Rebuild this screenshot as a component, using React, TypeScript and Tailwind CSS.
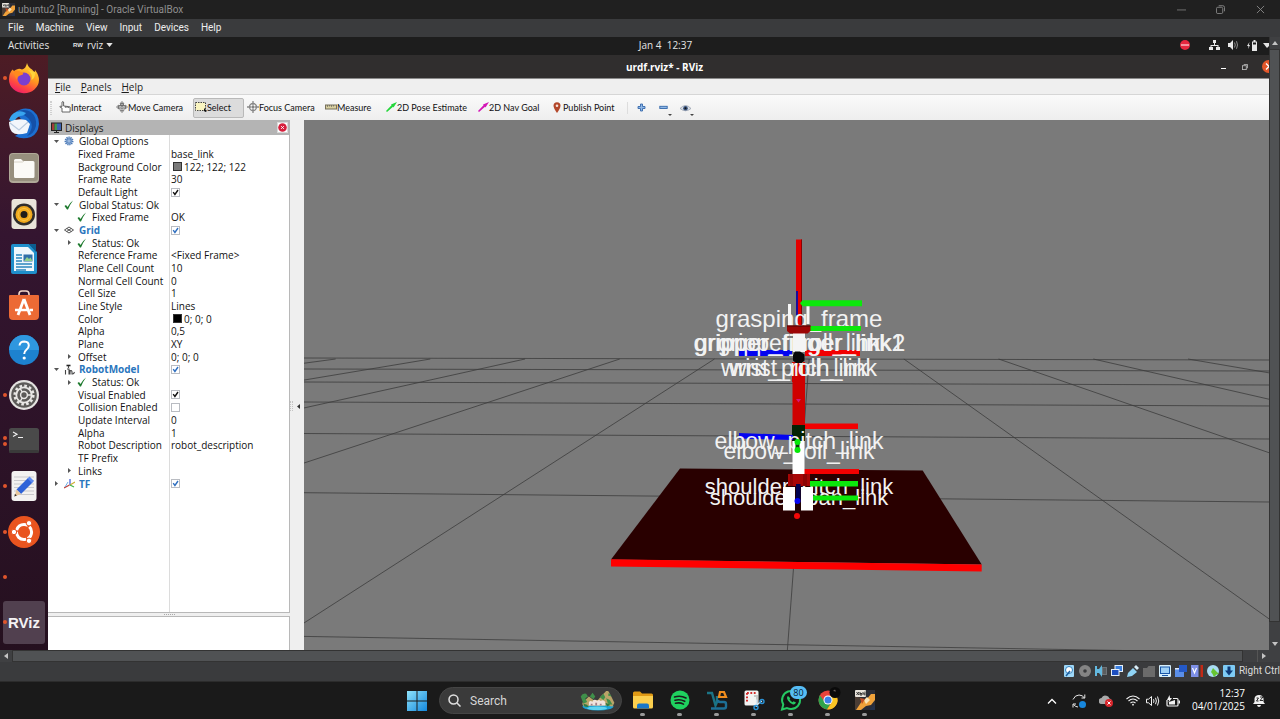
import type { ReactNode } from "react";

/* ---------- Host window (VirtualBox) ---------- */

function VBoxIcon({ className }: { className: string }) {
  return (
    <svg viewBox="0 0 20 20" className={className} aria-hidden="true">
      <rect width="20" height="20" fill="#2b2d36" />
      <path d="M0 6l6 2 3 5-5 7H0z" fill="#4a3d35" />
      <path d="M1 20l6-9 4-1 5-6h4v6l-4 5-5 1-5 4z" fill="#f0a23a" />
      <path d="M9 10l3-3 3 3-4 4z" fill="#fbe6b8" />
      <path d="M5 8l5 1-3 5z" fill="#c24f22" />
      <path d="M14 20l6-6v6z" fill="#23314a" />
      <rect width="11" height="7" rx="1" fill="#e8e4dc" />
      <path d="M1.500 2l2.500 3M4 2L1.500 5M5 3.500h2M5 2v3h2V3.800M8 2v2h2M10 1.500V5.500" stroke="#222" strokeWidth="0.900" fill="none" />
    </svg>
  );
}

function HostTitleBar() {
  return (
    <header className="flex h-[19px] shrink-0 items-center bg-[#202020] pl-[2px] text-[#8f8f8f]">
      <VBoxIcon className="size-[13px]" />
      <h1 className="ml-[3px] flex-1 font-['Roboto'] text-[10px] leading-none">ubuntu2 [Running] - Oracle VirtualBox</h1>
      <div className="flex">
        <button aria-label="Minimize" className="flex h-[19px] w-[39px] items-center justify-center">
          <svg viewBox="0 0 10 10" className="size-[9px]"><path d="M0 5.500h10" stroke="#777" /></svg>
        </button>
        <button aria-label="Restore" className="flex h-[19px] w-[39px] items-center justify-center">
          <svg viewBox="0 0 10 10" className="size-[9px]" fill="none" stroke="#8a8a8a">
            <rect x="0.500" y="2.500" width="7" height="7" rx="1.500" />
            <path d="M3 .8h4.500a2 2 0 012 2V7" />
          </svg>
        </button>
        <button aria-label="Close" className="flex h-[19px] w-[40px] items-center justify-center">
          <svg viewBox="0 0 10 10" className="size-[9px]"><path d="M1 1l8 8M9 1l-8 8" stroke="#8a8a8a" /></svg>
        </button>
      </div>
    </header>
  );
}

function HostMenu() {
  return (
    <nav className="flex h-[18px] shrink-0 items-center gap-[12px] bg-[#3a3b3d] pl-[8px] font-['Roboto'] text-[10px] leading-none text-[#eeeeee]">
      {["File", "Machine", "View", "Input", "Devices", "Help"].map((m) => (
        <button key={m}>{m}</button>
      ))}
    </nav>
  );
}

/* ---------- Guest desktop ---------- */

function GnomeBar() {
  return (
    <div className="grid h-[18px] shrink-0 grid-cols-[1fr_auto_1fr] items-center overflow-hidden bg-[#1d1d1d] pb-[2px] text-[10px] leading-none text-[#e4e4e4]">
      <div className="flex items-center">
        <button className="ml-[8px] w-[65px] text-left">Activities</button>
        <button className="flex items-center">
          <span className="font-['Liberation_Sans'] text-[6px] font-bold">RW</span>
          <span className="ml-[4px]">rviz</span>
          <svg viewBox="0 0 8 5" className="ml-[3px] h-[4px] w-[7px]"><path d="M0 0h8L4 5z" fill="#e4e4e4" /></svg>
        </button>
      </div>
      <time className="pl-[62px]">Jan 4&nbsp; 12:37</time>
      <div className="flex items-center justify-end">
        <svg viewBox="0 0 10 10" className="size-[10px]">
          <circle cx="5" cy="5" r="5" fill="#e5273f" />
          <path d="M1 5h8" stroke="#fff" strokeWidth="1" />
        </svg>
        <svg viewBox="0 0 11 10" className="ml-[19px] h-[10px] w-[11px]" fill="#e8e8e8">
          <path d="M4 0h3v3H4zM0 7h4v3H0zM7 7h4v3H7zM5 3h1v2h3.500v2h-1V6h-6v1h-1V5H5z" />
        </svg>
        <svg viewBox="0 0 11 10" className="ml-[8px] h-[10px] w-[11px]" fill="#e8e8e8">
          <path d="M0 3h2l3-3v10L2 7H0z" />
          <path d="M6.500 2.500q1.500 2.500 0 5M8.500 1.200q2 3.800 0 7.600" stroke="#8d8d8d" fill="none" />
        </svg>
        <svg viewBox="0 0 11 11" className="ml-[8px] h-[11px] w-[11px]" fill="#e8e8e8">
          <path d="M2.500 2L0 6h1.500L1 9l2-4H1.800z" />
          <path d="M5 1.500h1.500V0h2v1.500H10V11H5z" />
          <path d="M6 2.500h3v2H6z" fill="#1d1d1d" />
        </svg>
        <svg viewBox="0 0 6 5" className="ml-[5px] h-[5px] w-[6px]"><path d="M0 0h6v3L4 5z" fill="#e4e4e4" /></svg>
      </div>
    </div>
  );
}

const dockIcons: { name: string; dots: number; art: ReactNode; active?: boolean }[] = [
  {
    name: "Firefox",
    dots: 1,
    art: (
      <svg viewBox="0 0 32 32" className="size-[32px]">
        <defs>
          <linearGradient id="ff" x1="0.800" y1="0" x2="0.300" y2="1">
            <stop offset="0" stopColor="#ffe23c" />
            <stop offset="0.450" stopColor="#ff9a1f" />
            <stop offset="0.750" stopColor="#ff4a3f" />
            <stop offset="1" stopColor="#ee1c6b" />
          </linearGradient>
        </defs>
        <path d="M19 1q1 4 5 6.500 2 1.500 2.500 4L27 8q4 5 4 10A15 13.500 0 011 17.500Q1 11 4.500 7.500L6 9q2-1.500 4-2 2-.5 4 .5 4-1 5-6.500z" fill="url(#ff)" />
        <circle cx="16" cy="17" r="6.500" fill="#7a3fd0" />
        <path d="M6 9q4-1 9 2 1 1.500-3 2.500-3 1-3 4Q6 14 6 9z" fill="#ff8a1c" />
        <path d="M20 8q5 4 3.500 10 4-2 3.500-8z" fill="#ffd43a" />
      </svg>
    ),
  },
  {
    name: "Thunderbird",
    dots: 0,
    art: (
      <svg viewBox="0 0 32 32" className="size-[32px]">
        <path d="M8 5Q14 0 22 2q9 4 9 15-1 10-8 13-9 3-16-1l12-8z" fill="#1c6fd1" />
        <path d="M8 5q8-4 15 0 6 5 5 14-2 8-9 10 9-10 1-18Q14 6 8 5z" fill="#1450a8" />
        <path d="M8 5q5-2 10 1-2 3-6 3-5 2-6 7L1 13q2-6 7-8z" fill="#38a4ee" />
        <path d="M1 15q8-4 17-2l4 4-3 9Q8 29 4 25q-3-4-3-10z" fill="#f2f6fb" />
        <path d="M2 16l9 7 9-8" stroke="#b9cbe0" fill="none" strokeWidth="1.200" />
      </svg>
    ),
  },
  {
    name: "Files",
    dots: 0,
    art: (
      <svg viewBox="0 0 30 30" className="size-[30px]">
        <rect width="30" height="30" rx="4" fill="#b0a998" />
        <rect x="1" y="1" width="28" height="27" rx="3" fill="#978f7e" />
        <path d="M5 7.500Q5 6 6.500 6H12l2 2h10q1.500 0 1.500 1.500v14q0 1.500-1.500 1.500H6.500Q5 25 5 23.500z" fill="#fbfaf7" />
        <path d="M5 9h8.500L15 8" stroke="#d8d3c8" fill="none" />
      </svg>
    ),
  },
  {
    name: "Rhythmbox",
    dots: 0,
    art: (
      <svg viewBox="0 0 26 30" className="h-[30px] w-[26px]">
        <rect x="0.500" width="25" height="30" rx="3" fill="#e9e4da" />
        <circle cx="13" cy="15.500" r="11" fill="#2f2d2b" />
        <circle cx="13" cy="15.500" r="8.500" fill="#f0a81c" />
        <circle cx="13" cy="15.500" r="6" fill="none" stroke="#f7c548" />
        <circle cx="13" cy="15.500" r="3.500" fill="#1e1c1a" />
      </svg>
    ),
  },
  {
    name: "LibreOffice Writer",
    dots: 0,
    art: (
      <svg viewBox="0 0 26 30" className="h-[30px] w-[26px]">
        <path d="M2 0h16l8 8v20q0 2-2 2H2q-2 0-2-2V2q0-2 2-2z" fill="#1f8fcb" />
        <path d="M18 0h7v8z" fill="#0b5d8f" />
        <path d="M3 3h14l6 6v18H3z" fill="#eef7fc" />
        <path d="M5 11h6M5 14h6M5 17h6M5 20h16M5 23h16M5 26h10" stroke="#2a86bd" strokeWidth="1.300" />
        <rect x="12.500" y="10.500" width="9" height="7" fill="#2f6fa8" />
        <path d="M13 17l3-4 2 2 1.500-1.500 2 3.500z" fill="#8fd08a" />
      </svg>
    ),
  },
  {
    name: "Ubuntu Software",
    dots: 0,
    art: (
      <svg viewBox="0 0 30 30" className="size-[30px]">
        <path d="M10 7V4q0-3 3-3h4q3 0 3 3v3" fill="none" stroke="#f3d5c6" strokeWidth="1.600" />
        <path d="M0 6q0-1 1-1h28q1 0 1 1v20q0 4-4 4H4q-4 0-4-4z" fill="#ec6a35" />
        <path d="M15 9L9 25M15 9l6 16" stroke="#fff" strokeWidth="2.800" />
        <path d="M6 20h12M20.500 20H24" stroke="#fff" strokeWidth="2.500" />
      </svg>
    ),
  },
  {
    name: "Help",
    dots: 0,
    art: (
      <svg viewBox="0 0 30 30" className="size-[30px]">
        <circle cx="15" cy="15" r="15" fill="#1d82cf" />
        <path d="M0 15a15 15 0 0130 0z" fill="#2f97df" />
        <path d="M10.500 10.500q.5-4 4.800-4 4.500.2 4.500 4 0 2.500-2.600 4.500-2 1.500-2 4" fill="none" stroke="#fff" strokeWidth="2" />
        <circle cx="15.200" cy="23" r="1.600" fill="#fff" />
      </svg>
    ),
  },
  {
    name: "Settings",
    dots: 1,
    art: (
      <svg viewBox="0 0 30 30" className="size-[30px]">
        <circle cx="15" cy="15" r="15" fill="#e4e2e0" />
        <circle cx="15" cy="15" r="12.800" fill="#5c5a58" />
        <circle cx="15" cy="15" r="9.300" fill="none" stroke="#e9e7e5" strokeWidth="2.600" strokeDasharray="2.600 2.270" />
        <circle cx="15" cy="15" r="7.700" fill="none" stroke="#e9e7e5" strokeWidth="1.800" />
        <circle cx="15" cy="15" r="3.400" fill="none" stroke="#e9e7e5" strokeWidth="1.500" />
        <path d="M18.500 15h4M13.200 12l-2-3.500M13.200 18l-2 3.500" stroke="#e9e7e5" strokeWidth="1.500" />
      </svg>
    ),
  },
  {
    name: "Terminal",
    dots: 2,
    art: (
      <svg viewBox="0 0 30 25" className="h-[25px] w-[30px]">
        <rect width="30" height="25" rx="2.500" fill="#4a4a4a" />
        <rect y="22" width="30" height="3" rx="1.500" fill="#3a3a3a" />
        <path d="M4 4l4 2.200L4 8.400M9 9.500h5" stroke="#f1f1f1" fill="none" strokeWidth="1.100" />
      </svg>
    ),
  },
  {
    name: "Text Editor",
    dots: 1,
    art: (
      <svg viewBox="0 0 26 30" className="h-[30px] w-[26px]">
        <rect x="0.500" width="25" height="30" rx="3" fill="#f3f2f1" />
        <path d="M3 6h20M3 9.500h20M3 13h20M3 16.500h20M3 20h20M3 23.500h20" stroke="#c9c9cc" />
        <path d="M17 7l4.500 4.500L10 23l-4.500-4.500z" fill="#2f63d8" />
        <path d="M18.500 5.500l4.500 4.500-2 2-4.500-4.500z" fill="#5d8af0" />
        <path d="M5.500 18.500L10 23l-6.500 2.500z" fill="#e8c79d" />
        <path d="M4.200 23l1.600 1.600-2.600 1z" fill="#2a2a2a" />
      </svg>
    ),
  },
  {
    name: "Ubuntu",
    dots: 1,
    art: (
      <svg viewBox="0 0 32 32" className="size-[32px]">
        <circle cx="16" cy="16" r="16" fill="#e9541f" />
        <circle cx="16" cy="16" r="7.600" fill="none" stroke="#fff" strokeWidth="3" strokeDasharray="14.300 1.620" strokeDashoffset="6.300" />
        <g fill="#fff" stroke="#e9541f">
          <circle cx="6" cy="16" r="2.700" />
          <circle cx="21" cy="7.200" r="2.700" />
          <circle cx="21" cy="24.800" r="2.700" />
        </g>
      </svg>
    ),
  },
  { name: "Background application", dots: 1, art: null },
  {
    name: "RViz",
    dots: 1,
    active: true,
    art: <span className="font-['Liberation_Sans_Narrow','Liberation_Sans'] text-[15px] font-bold leading-none text-[#f4f2f4]">RViz</span>,
  },
];

function Dock() {
  return (
    <aside className="flex w-[48px] shrink-0 flex-col bg-linear-to-b from-[#4d1c24] via-[#341530] via-30% to-[#25101f] pb-[5px]">
      {dockIcons.map((d) => (
        <button key={d.name} aria-label={d.name} className="relative flex flex-1 items-center justify-center">
          {d.active && <span className="absolute inset-x-[3px] inset-y-[1px] rounded-[3px] bg-[#51404f]" />}
          <span className="absolute left-[3px] flex flex-col gap-[2px]">
            {Array.from({ length: d.dots }, (_, i) => (
              <i key={i} className="size-[4px] rounded-full bg-[#e0552c]" />
            ))}
          </span>
          <span className="relative">{d.art}</span>
        </button>
      ))}
    </aside>
  );
}

/* ---------- RViz window ---------- */

function RvizTitleBar() {
  return (
    <div className="grid h-[24px] shrink-0 grid-cols-[1fr_auto_1fr] items-center overflow-hidden border-b border-[#8a8a8a] bg-[#302e2e] text-white">
      <span />
      <h2 className="pl-[12px] text-[10px] font-bold leading-none">urdf.rviz* - RViz</h2>
      <div className="flex items-center justify-end">
        <button aria-label="Minimize" className="flex size-[22px] items-end justify-center pb-[9px]">
          <i className="h-px w-[5px] bg-white" />
        </button>
        <button aria-label="Restore" className="flex size-[22px] items-center justify-center">
          <svg viewBox="0 0 7 7" className="size-[6px]" fill="none" stroke="#bbb">
            <rect x="0.500" y="2" width="4.500" height="4.500" />
            <path d="M2 .5h4.500V5" />
          </svg>
        </button>
        <button aria-label="Close" className="ml-[6px] flex">
          <svg viewBox="0 0 7 13" className="h-[13px] w-[7px]">
            <circle cx="6.500" cy="6.500" r="6.500" fill="#e2572b" />
            <path d="M4 3.500l3 3-3 3" stroke="#fff" fill="none" strokeWidth="1.300" />
          </svg>
        </button>
      </div>
    </div>
  );
}

function RvizMenu() {
  return (
    <nav className="flex h-[16px] shrink-0 items-center gap-[10px] border-b border-[#d6d6d6] bg-[#efefef] pl-[7px] text-[10px] leading-none text-[#1c1c1c]">
      {["File", "Panels", "Help"].map((m) => (
        <button key={m}>
          <u>{m[0]}</u>
          {m.slice(1)}
        </button>
      ))}
    </nav>
  );
}

function Arrow({ color }: { color: string }) {
  return (
    <svg viewBox="0 0 11 10" className="h-[10px] w-[11px]">
      <path d="M0 9L5.500 3.200 5 2.500 11 0 7.500 5.500 7 4.700 1 10z" fill={color} />
    </svg>
  );
}

const tools: { label: string; icon: ReactNode; width: string; active?: boolean }[] = [
  {
    label: "Interact",
    width: "w-[57px]",
    icon: (
      <svg viewBox="0 0 12 12" className="size-[12px]" fill="#fff" stroke="#555" strokeWidth="0.900">
        <path d="M3 11V7L.8 6 1.500 5 3 5.500V1q1-1 1.600 0v4l1.800.2L8 5.400l1.600.2 1.500.4V11z" />
        <path d="M6.400 5.200v1.600M8 5.400V7M9.600 5.600V7" />
      </svg>
    ),
  },
  {
    label: "Move Camera",
    width: "w-[79px]",
    icon: (
      <svg viewBox="0 0 12 12" className="size-[12px]" fill="#ddd" stroke="#666" strokeWidth="0.800">
        <path d="M6 .5l1.800 2H4.200zM6 11.500l1.800-2H4.200zM.5 6l2-1.800v3.600zM11.500 6l-2-1.800v3.600z" />
        <path d="M3 4.500h6v3.500H3zM4.500 3h3v1.500h-3z" />
        <circle cx="6" cy="6.200" r="1.200" />
      </svg>
    ),
  },
  {
    label: "Select",
    width: "w-[51px]",
    active: true,
    icon: (
      <svg viewBox="0 0 12 10" className="h-[10px] w-[12px]">
        <rect x="0.500" y="0.500" width="10" height="8" fill="#faf5c0" stroke="#444" strokeDasharray="1.500 1" />
        <path d="M9 6l3 3-1.500 1L9 9z" fill="#111" />
      </svg>
    ),
  },
  {
    label: "Focus Camera",
    width: "w-[78px]",
    icon: (
      <svg viewBox="0 0 12 12" className="size-[12px]" fill="none" stroke="#888">
        <circle cx="6" cy="6" r="3.500" strokeWidth="1.300" />
        <path d="M6 0v4M6 8v4M0 6h4M8 6h4" strokeWidth="1.300" />
        <circle cx="6" cy="6" r="1.200" fill="#777" />
      </svg>
    ),
  },
  {
    label: "Measure",
    width: "w-[61px]",
    icon: (
      <svg viewBox="0 0 12 12" className="size-[12px]">
        <rect x="0.500" y="4" width="11" height="4" fill="#d8cfa0" stroke="#77705a" />
        <path d="M2.500 4v2M4.500 4v1.500M6.500 4v2M8.500 4v1.500" stroke="#555" strokeWidth="0.600" />
      </svg>
    ),
  },
  { label: "2D Pose Estimate", width: "w-[92px]", icon: <Arrow color="#24d63a" /> },
  { label: "2D Nav Goal", width: "w-[74px]", icon: <Arrow color="#d316b6" /> },
  {
    label: "Publish Point",
    width: "w-[77px]",
    icon: (
      <svg viewBox="0 0 11 11" className="size-[11px]">
        <path d="M5 11Q1.500 6 1.500 3.800 1.500.2 5 .2t3.500 3.600Q8.500 6 5 11z" fill="#b3472a" />
        <circle cx="5" cy="3.800" r="1.300" fill="#f6e3da" />
      </svg>
    ),
  },
];

function Caret() {
  return (
    <svg viewBox="0 0 4 2" className="absolute right-[2px] bottom-[3px] h-[2px] w-[4px]">
      <path d="M0 0h4L2 2z" fill="#444" />
    </svg>
  );
}

function Toolbar() {
  return (
    <div className="flex h-[25px] shrink-0 items-center bg-linear-to-b from-[#fafafa] to-[#eeeeee] font-['Lato'] text-[9px] leading-none text-[#111]">
      <i className="mr-[5px] ml-[2px] h-[14px] w-[2px] border-x border-dotted border-[#d0d0d0]" />
      {tools.map((t) => (
        <button
          key={t.label}
          className={
            "flex h-[20px] shrink-0 items-center whitespace-nowrap pb-px " +
            (t.active ? "mr-px rounded-[2px] border border-[#b9b9b9] bg-[#dcdcdc] px-px " : "px-[2px] ") +
            t.width
          }
        >
          {t.icon}
          {t.label}
        </button>
      ))}
      <i className="mr-[2px] h-[12px] w-px bg-[#ddd]" />
      <button aria-label="Add tool" className="flex size-[22px] items-center justify-center">
        <svg viewBox="0 0 9 9" className="size-[9px]"><path d="M3.500 1h2v2.500H8v2H5.500V8h-2V5.500H1v-2h2.500z" fill="#8fb7e6" stroke="#3569ab" strokeWidth="0.900" /></svg>
      </button>
      <button aria-label="Remove tool" className="relative flex size-[22px] items-center justify-center">
        <svg viewBox="0 0 9 9" className="size-[9px]"><rect x="0.800" y="3.300" width="7.400" height="2.200" fill="#8fb7e6" stroke="#3569ab" strokeWidth="0.900" /></svg>
        <Caret />
      </button>
      <button aria-label="Tool names" className="relative flex size-[22px] items-center justify-center">
        <svg viewBox="0 0 11 8" className="h-[8px] w-[11px]">
          <path d="M0 4.500Q5.500-1.500 11 4.500 5.500 9 0 4.500z" fill="#d7dde6" stroke="#8f99a8" strokeWidth="0.700" />
          <circle cx="5.500" cy="4.200" r="2.300" fill="#39537e" />
          <circle cx="5.500" cy="4.200" r="1" fill="#111" />
        </svg>
        <Caret />
      </button>
    </div>
  );
}

/* ---------- Displays panel ---------- */

const icons = {
  gear: (
    <svg viewBox="0 0 10 10" className="size-[10px]">
      <circle cx="5" cy="5" r="3.600" fill="#9db9de" stroke="#4a78b5" strokeWidth="1.800" strokeDasharray="1.200 0.800" />
      <circle cx="5" cy="5" r="2.200" fill="none" stroke="#4a78b5" strokeWidth="0.800" />
    </svg>
  ),
  ok: (
    <svg viewBox="0 0 10 10" className="size-[10px]"><path d="M.5 6L2 5l1.500 2Q6 2.500 9 .5q-3 4-5 9H3z" fill="#1d7a2d" /></svg>
  ),
  grid: (
    <svg viewBox="0 0 10 8" className="h-[8px] w-[10px]" fill="none" stroke="#444" strokeWidth="0.900">
      <path d="M.5 4L5 1l4.500 3L5 7zM2.800 2.500l4.500 3M7.200 2.500l-4.500 3" />
    </svg>
  ),
  robot: (
    <svg viewBox="0 0 11 11" className="size-[11px]" fill="none">
      <path d="M2.500 1.500h4" stroke="#222" strokeWidth="1.600" />
      <path d="M4.500 2v2M1.500 10.500V6M3 5h2v5.500M6 6v4.500M6 7q2-1 2 1v2.500M8.500 10q1.500 0 2-2" stroke="#444" strokeWidth="1.100" />
    </svg>
  ),
  tf: (
    <svg viewBox="0 0 11 11" className="size-[11px]" fill="none" strokeWidth="1.200">
      <path d="M6 1v6" stroke="#3a52d6" />
      <path d="M5.500 7L0 10" stroke="#c0403a" />
      <path d="M6 7l5-3" stroke="#cfae36" />
      <path d="M6 7l4 2" stroke="#41b54a" />
      <path d="M1 9l3-5" stroke="#4a9ae0" strokeWidth="0.800" />
    </svg>
  ),
};

type Row = {
  name: string;
  level: 0 | 1 | 2;
  tree?: "open" | "closed";
  icon?: keyof typeof icons;
  display?: boolean;
  value?: string;
  swatch?: string;
  check?: boolean;
};

const rows: Row[] = [
  { name: "Global Options", level: 0, tree: "open", icon: "gear" },
  { name: "Fixed Frame", level: 1, value: "base_link" },
  { name: "Background Color", level: 1, value: "122; 122; 122", swatch: "bg-[#7a7a7a]" },
  { name: "Frame Rate", level: 1, value: "30" },
  { name: "Default Light", level: 1, check: true },
  { name: "Global Status: Ok", level: 0, tree: "open", icon: "ok" },
  { name: "Fixed Frame", level: 2, icon: "ok", value: "OK" },
  { name: "Grid", level: 0, tree: "open", icon: "grid", display: true, check: true },
  { name: "Status: Ok", level: 2, tree: "closed", icon: "ok" },
  { name: "Reference Frame", level: 1, value: "<Fixed Frame>" },
  { name: "Plane Cell Count", level: 1, value: "10" },
  { name: "Normal Cell Count", level: 1, value: "0" },
  { name: "Cell Size", level: 1, value: "1" },
  { name: "Line Style", level: 1, value: "Lines" },
  { name: "Color", level: 1, value: "0; 0; 0", swatch: "bg-black" },
  { name: "Alpha", level: 1, value: "0,5" },
  { name: "Plane", level: 1, value: "XY" },
  { name: "Offset", level: 1, tree: "closed", value: "0; 0; 0" },
  { name: "RobotModel", level: 0, tree: "open", icon: "robot", display: true, check: true },
  { name: "Status: Ok", level: 2, tree: "closed", icon: "ok" },
  { name: "Visual Enabled", level: 1, check: true },
  { name: "Collision Enabled", level: 1, check: false },
  { name: "Update Interval", level: 1, value: "0" },
  { name: "Alpha", level: 1, value: "1" },
  { name: "Robot Description", level: 1, value: "robot_description" },
  { name: "TF Prefix", level: 1 },
  { name: "Links", level: 1, tree: "closed" },
  { name: "TF", level: 0, tree: "closed", icon: "tf", display: true, check: true },
];

function Check({ label, on, blue }: { label: string; on: boolean; blue?: boolean }) {
  return (
    <span className="relative block size-[9px]">
      <input
        type="checkbox"
        aria-label={label}
        defaultChecked={on}
        className="peer block size-[9px] appearance-none border border-[#b9bcc2] bg-white"
      />
      <svg viewBox="0 0 9 9" className="pointer-events-none absolute inset-0 hidden size-[9px] peer-checked:block">
        <path d="M2.200 4.200l1.700 2.300L7 2" fill="none" stroke={blue ? "#2f6fc0" : "#111"} strokeWidth="1.400" />
      </svg>
    </span>
  );
}

function TreeRow({ row }: { row: Row }) {
  const indented = row.level > 0;
  return (
    <tr>
      <th scope="row" className="p-0 font-normal">
        <div className={"flex h-[12px] items-center whitespace-nowrap " + (indented ? "pl-[18px]" : "pl-[5px]")}>
          <span className="flex w-[6px] shrink-0 justify-center">
            {row.tree === "open" && (
              <svg viewBox="0 0 5 3" className="h-[3px] w-[5px]"><path d="M0 0h5L2.500 3z" fill="#555" /></svg>
            )}
            {row.tree === "closed" && (
              <svg viewBox="0 0 3 5" className="h-[5px] w-[3px]"><path d="M0 0l3 2.500L0 5z" fill="#555" /></svg>
            )}
          </span>
          {row.icon && <span className="ml-[5px] flex w-[15px] shrink-0 items-center">{icons[row.icon]}</span>}
          <span className={(row.icon ? "" : "ml-[6px] ") + (row.display ? "font-bold text-[#2a76bd]" : "")}>{row.name}</span>
        </div>
      </th>
      <td className="p-0">
        <div className="flex h-[12px] items-center pl-px">
          {row.swatch && <i className={"mr-[2px] ml-[2px] size-[9px] border border-[#333] " + row.swatch} />}
          {row.value}
          {row.check !== undefined && <Check label={row.name} on={row.check} blue={row.display} />}
        </div>
      </td>
    </tr>
  );
}

function DisplaysPanel() {
  return (
    <section className="flex w-[242px] shrink-0 flex-col bg-[#efefef]" aria-label="Displays">
      <div className="flex h-[15px] shrink-0 items-center bg-[#b4b4b4] pl-[3px] pr-[2px] text-[10px] leading-none text-[#1c1c1c]">
        <svg viewBox="0 0 11 11" className="size-[11px]">
          <rect x="0.500" y="1" width="10" height="7.500" fill="#223" stroke="#222" />
          <path d="M1 1.500h2.500V8H1z" fill="#a33a3a" />
          <path d="M3.500 1.500H6V8H3.500z" fill="#3f9650" />
          <path d="M6 1.500h4V8H6z" fill="#3d62b0" />
          <path d="M3 10.500h5M5.500 8.500v2" stroke="#222" />
        </svg>
        <h3 className="ml-[3px] flex-1">Displays</h3>
        <button aria-label="Close panel" className="flex size-[11px] items-center justify-center border border-[#d9d9d9] bg-white">
          <svg viewBox="0 0 9 9" className="size-[9px]">
            <circle cx="4.500" cy="4.500" r="4.300" fill="#d61f3c" />
            <path d="M3.200 3.200l2.600 2.600M5.800 3.200L3.200 5.800" stroke="#fff" />
          </svg>
        </button>
      </div>
      <div className="flex-1 border-r border-b border-[#b8b8b8] bg-white">
        <div className="grid h-full grid-cols-[122px_1fr]">
          <table className="col-span-2 col-start-1 row-start-1 h-[355px] w-full table-fixed border-collapse text-left text-[10px] leading-[12px] text-[#111]">
            <colgroup>
              <col className="w-[122px]" />
              <col />
            </colgroup>
            <tbody>
              {rows.map((r, i) => (
                <TreeRow key={i} row={r} />
              ))}
            </tbody>
          </table>
          <div className="pointer-events-none col-start-1 row-start-1 border-r border-[#dcdcdc]" />
        </div>
      </div>
      <div className="flex h-[3px] shrink-0 items-center justify-center">
        <i className="w-[11px] border-t border-dotted border-[#aaa]" />
      </div>
      <div className="h-[34px] shrink-0 border-t border-r border-[#b8b8b8] bg-white" />
    </section>
  );
}

/* ---------- 3D view ---------- */

const gridRows = [
  [358, 360],
  [369, 371],
  [382, 385],
  [402, 406],
  [433.5, 439],
  [492.7, 502],
  [636.4, 653],
];
const gridSlopes = [-5, -4, -3, -2, -1, 0, 1, 2, 3, 4, 5].map((k) => -0.075 + k * 1.48);

const frameLabels: { text: string; y: number; size: number; x?: number }[] = [
  { text: "grasping_frame", y: 327, size: 24 },
  { text: "gripper_finger_link1", y: 351, size: 24 },
  { text: "gripper_finger_link2", y: 351, size: 24, x: 800 },
  { text: "gripper_roll_link", y: 351, size: 23 },
  { text: "wrist_pitch_link", y: 376, size: 23 },
  { text: "wrist_roll_link", y: 376, size: 23 },
  { text: "elbow_pitch_link", y: 449, size: 23 },
  { text: "elbow_roll_link", y: 459, size: 23 },
  { text: "shoulder_pitch_link", y: 494, size: 22 },
  { text: "shoulder_pan_link", y: 505, size: 22 },
];

function Scene() {
  return (
    <svg
      viewBox="304 120 965 530"
      preserveAspectRatio="xMidYMid slice"
      className="size-full bg-[#7a7a7a]"
      role="img"
      aria-label="Robot model view"
    >
      <g stroke="#3c3c3c" strokeWidth="0.800">
        {gridRows.map(([l, r]) => (
          <path key={l} d={`M304 ${l}L1269 ${r}`} />
        ))}
        {gridSlopes.map((s) => (
          <path key={s} d={`M${814 + s * 64} 359L${814 + s * 360} 655`} />
        ))}
      </g>

      <path d="M680 468.500L922.700 470.500 981.700 564.500 611 559.500z" fill="#290000" />
      <path d="M611 559.300L981.700 564.500v7L611 566.500z" fill="#fe0000" />

      <g>
        <path d="M796 239.500h6V326h-6z" fill="#e30000" />
        <path d="M801 239.500h1V326h-1z" fill="#8d0000" />
        <path d="M796 291h2v35h-2z" fill="#1a0a9a" />
        <path d="M792.500 380h12.500v45H792.500zM792 362h13v20H792z" fill="#cf0000" />
        <path d="M792 425h13v16h-13z" fill="#042304" />
        <path d="M739 433l54 2v5l-54-1.500z" fill="#0404f0" />
        <path d="M805 423.500h53v5.500h-53z" fill="#f20000" />
        <path d="M739 350h53v6h-53z" fill="#0404f0" />
        <path d="M805 350h55v6h-55z" fill="#f20000" />
        <path d="M803 469h56v5h-56z" fill="#f20000" />
      </g>

      <g fill="#f2f2f2" fontFamily="'Liberation Sans', Arial, sans-serif" textAnchor="middle">
        {frameLabels.map((l) => (
          <text key={l.text} x={l.x ?? 799} y={l.y} fontSize={l.size}>{l.text}</text>
        ))}
      </g>

      <g>
        <path d="M788 304h3v22h-3zM806.500 306h3v18h-3z" fill="#f7f7f7" />
        <path d="M800 303.300l2.500-3H862v6h-59.500z" fill="#0be80b" />
        <path d="M810 326h51v5h-51z" fill="#0be80b" />
        <path d="M793 333h12v19h-12z" fill="#f4f4f4" />
        <path d="M787 325.500h23.500v5.500l-3 2.500h-17.500l-3-2.500z" fill="#9c0404" />
        <path d="M787 325.500h23.500v1h-23.500z" fill="#4a0000" />
        <path d="M793 355l2-3.500h5l4.500 3v6l-2.500 2.500h-6l-3-2.500z" fill="#080808" />
        <path d="M796 399h5l-2.500 3.500z" fill="#d3187a" />
        <path d="M792.500 441h12v33h-12z" fill="#fff" />
        <path d="M795.500 441h4v10h-4z" fill="#0a3a0a" />
        <circle cx="797.500" cy="442" r="3" fill="#07e807" />
        <circle cx="797.500" cy="450" r="3" fill="#07e807" />
        <path d="M788 474h22v12h-22z" fill="#a80606" />
        <path d="M790 474h3v12h-3zM803 474h4v12h-4z" fill="#8c0404" />
        <path d="M783 487h30v23.500h-30z" fill="#fff" />
        <path d="M795 487h6v25h-6z" fill="#230404" />
        <path d="M796 484h4.500v16H796z" fill="#030350" />
        <path d="M810 481h48v5.500h-48zM813 495.500h45v5h-45z" fill="#0be80b" />
        <circle cx="797.500" cy="501" r="3" fill="#0707f5" />
        <circle cx="797" cy="516" r="3" fill="#f50707" />
      </g>
    </svg>
  );
}

/* ---------- Scroll bars ---------- */

function VScroll() {
  return (
    <div className="flex w-[11px] shrink-0 flex-col bg-[#3f4042]" aria-hidden="true">
      <i className="flex h-[12px] items-center justify-center border-l border-[#333]">
        <svg viewBox="0 0 6 4" className="h-[4px] w-[6px]"><path d="M0 4h6L3 0z" fill="#c4c4c4" /></svg>
      </i>
      <i className="flex-1 border-x border-y border-[#333] bg-[#505254]" />
      <i className="h-[16px]" />
      <i className="flex h-[12px] items-center justify-center">
        <svg viewBox="0 0 6 4" className="h-[4px] w-[6px]"><path d="M0 0h6L3 4z" fill="#c4c4c4" /></svg>
      </i>
    </div>
  );
}

function HScroll() {
  return (
    <div className="flex h-[12px] shrink-0 bg-[#3f4042] pr-[11px]" aria-hidden="true">
      <i className="flex w-[12px] items-center justify-center">
        <svg viewBox="0 0 4 6" className="h-[6px] w-[4px]"><path d="M4 0v6L0 3z" fill="#c4c4c4" /></svg>
      </i>
      <i className="flex-1 border border-[#333] bg-[#505254]" />
      <i className="w-[14px]" />
      <i className="flex w-[12px] items-center justify-center border-l border-[#555]">
        <svg viewBox="0 0 4 6" className="h-[6px] w-[4px]"><path d="M0 0v6l4-3z" fill="#c4c4c4" /></svg>
      </i>
    </div>
  );
}

/* ---------- VirtualBox status bar ---------- */

const statusIcons: { name: string; art: ReactNode }[] = [
  {
    name: "Hard disks",
    art: (
      <>
        <rect x="1" width="10" height="12" rx="1" fill="#9fd8f8" />
        <circle cx="6" cy="5" r="3.500" fill="#fff" stroke="#2f7fc0" />
        <path d="M3 11l4-5" stroke="#1a5ea0" strokeWidth="1.500" />
      </>
    ),
  },
  {
    name: "Optical drives",
    art: (
      <>
        <circle cx="6" cy="6" r="6" fill="#848484" />
        <circle cx="6" cy="6" r="1.800" fill="#3a3b3d" />
      </>
    ),
  },
  {
    name: "Audio",
    art: (
      <>
        <path d="M0 1h2v10H0zM2 4h2l3-4v12L4 8H2z" fill="#63b9e0" />
        <path d="M7 2h5v8H7z" fill="#6f7478" />
        <path d="M8 4h3M8 6h3M8 8h3" stroke="#444" />
      </>
    ),
  },
  {
    name: "Network",
    art: (
      <>
        <rect x="4" y="0.500" width="7.500" height="6" fill="#3a7fe0" stroke="#e6f0fa" />
        <rect x="0.500" y="4.500" width="7.500" height="6" fill="#1d4fc0" stroke="#e6f0fa" />
      </>
    ),
  },
  {
    name: "USB",
    art: (
      <>
        <path d="M0 12l1-4 5-5 4 4-5 4z" fill="#8fd3f5" />
        <path d="M7 2l2-2 3 3-2 2z" fill="#d9eef9" />
      </>
    ),
  },
  { name: "Shared folders", art: <path d="M0 3h4l1.500-2H12v11H0z" fill="#6b6b6b" /> },
  {
    name: "Display",
    art: (
      <>
        <rect width="12" height="12" rx="1" fill="#d5eefb" />
        <rect x="1.500" y="2" width="9" height="6.500" fill="#9fd0f5" stroke="#1a56a8" />
        <path d="M3 10.500h6" stroke="#1a56a8" />
      </>
    ),
  },
  {
    name: "Recording",
    art: (
      <>
        <path d="M0 3h9v9H0z" fill="#5b8fe8" />
        <path d="M4 0h8v7H4z" fill="#2459c8" />
        <path d="M0 3h4v1.500H0z" fill="#dce8fa" />
      </>
    ),
  },
  {
    name: "CPU",
    art: (
      <>
        <rect width="7.500" height="12" fill="#7d8fe6" />
        <path d="M1.500 3l2 5 2-5" stroke="#fff" fill="none" strokeWidth="1.200" />
        <rect x="9.500" width="2.500" height="12" fill="#c32a16" />
      </>
    ),
  },
  {
    name: "Mouse integration",
    art: (
      <>
        <circle cx="6" cy="6" r="6" fill="#a9dcf3" />
        <path d="M6 3l6 6-2.500.5L7 12 5.500 9 4 7z" fill="#67c431" />
      </>
    ),
  },
  {
    name: "Keyboard capture",
    art: (
      <>
        <rect width="12" height="12" rx="1" fill="#7ecbf5" />
        <path d="M4.500 1.500h3v4H10l-4 5-4-5h2.500z" fill="#0d3a78" />
      </>
    ),
  },
];

function StatusBar() {
  return (
    <div className="flex h-[19px] shrink-0 items-center justify-end gap-[4px] overflow-hidden bg-[#3a3b3d] pb-px text-[10px] leading-none text-[#dcdcdc]">
      {statusIcons.map((s) => (
        <svg key={s.name} viewBox="0 0 12 12" className="size-[12px]" role="img" aria-label={s.name}>{s.art}</svg>
      ))}
      <span className="whitespace-nowrap font-['Roboto']">Right Ctrl</span>
    </div>
  );
}

/* ---------- Windows taskbar ---------- */

const taskApps: { name: string; art: ReactNode }[] = [
  {
    name: "File Explorer",
    art: (
      <>
        <path d="M0 3q0-1.500 1.500-1.500H7l2 2h9.500Q20 3.500 20 5v3H0z" fill="#e09a15" />
        <path d="M0 6h20v11q0 1.500-1.500 1.500h-17Q0 18.500 0 17z" fill="#fbcf4e" />
        <path d="M4 18.500v-3q0-2 2-2h8q2 0 2 2v3z" fill="#1877c9" />
      </>
    ),
  },
  {
    name: "Spotify",
    art: (
      <>
        <circle cx="10" cy="10" r="9.500" fill="#1fd15f" />
        <path d="M4.500 7q6-2 11.500 1M5 10.300q5-1.500 9.700 1M5.500 13.300q4.200-1.200 8 .8" fill="none" stroke="#1b1b1b" strokeWidth="1.600" strokeLinecap="round" />
      </>
    ),
  },
  {
    name: "VirtualBox",
    art: (
      <>
        <path d="M0 3h5l3.500 12.500L10 12V6" fill="none" stroke="#1b7486" strokeWidth="2.400" />
        <path d="M4 18.500h13q2 0 2-2V14q0-2-2-2h-4q-2 0-2-2" fill="none" stroke="#1d6f96" strokeWidth="2.400" />
        <path d="M13 2h4l2 5h-7z" fill="none" stroke="#f08c1d" strokeWidth="2.200" />
      </>
    ),
  },
  {
    name: "Snipping Tool",
    art: (
      <>
        <rect x="0.500" y="0.500" width="14" height="15" rx="1.500" fill="#f3f3f3" />
        <path d="M3 3h9M3 3v9" stroke="#d32b2b" strokeWidth="2" strokeDasharray="1.800 1.600" />
        <path d="M10 6h3v8" stroke="#c8c8c8" fill="none" strokeWidth="2" />
        <path d="M11 16l7-5M12.500 17V9.500" stroke="#d0e6f5" strokeWidth="1.200" />
        <circle cx="12" cy="17.500" r="2" fill="none" stroke="#2a93d8" strokeWidth="1.400" />
        <circle cx="18" cy="11.500" r="2" fill="none" stroke="#2a93d8" strokeWidth="1.400" />
      </>
    ),
  },
  {
    name: "WhatsApp",
    art: (
      <>
        <path d="M1 19.500l1.300-5A9 9 0 1110 19q-2 0-4-.9z" fill="#141414" stroke="#25c862" strokeWidth="2" />
        <path d="M7 6q-2 1.500 0 4.500t5 4q2 .5 3-2l-2.500-1.300-1 1Q9.500 11.500 8.500 9.300l.8-1z" fill="#25c862" />
      </>
    ),
  },
  {
    name: "Chrome",
    art: (
      <>
        <circle cx="10" cy="10" r="9.500" fill="#e8423a" />
        <path d="M1.800 5.200A9.500 9.500 0 009 19.500L13.500 12 6 11z" fill="#2fa34c" />
        <path d="M9 19.500A9.500 9.500 0 0018.700 6H10l4 6z" fill="#fbc624" />
        <circle cx="10" cy="10" r="4.500" fill="#fff" />
        <circle cx="10" cy="10" r="3.500" fill="#3b7fe8" />
        <circle cx="17" cy="2.500" r="5.500" fill="#0a0a0a" />
        <path d="M15 1l2-1.500 1 2z" fill="#6d6360" />
      </>
    ),
  },
];

function Taskbar() {
  return (
    <footer className="grid h-[38px] shrink-0 grid-cols-[1fr_auto_1fr] items-center border-t border-[#2c2c2c] bg-[#1a1a1a] text-white">
      <span />
      <div className="flex items-center pl-[10px]">
        <button aria-label="Start" className="mr-[12px]">
          <svg viewBox="0 0 20 20" className="size-[20px]">
            <defs>
              <linearGradient id="win" x1="0" y1="0" x2="1" y2="1">
                <stop offset="0" stopColor="#8fe3fb" />
                <stop offset="1" stopColor="#1387dc" />
              </linearGradient>
            </defs>
            <path d="M0 0h9.500v9.500H0zM10.500 0H20v9.500h-9.500zM0 10.500h9.500V20H0zM10.500 10.500H20V20h-9.500z" fill="url(#win)" />
          </svg>
        </button>
        <label className="flex h-[27px] w-[183px] items-center rounded-full border border-[#454545] bg-[#3a3a3a] pr-[4px] pl-[8px]">
          <svg viewBox="0 0 13 13" className="size-[13px] shrink-0" fill="none" stroke="#e0e0e0" strokeWidth="1.500">
            <circle cx="5.500" cy="5.500" r="4.500" />
            <path d="M9 9l3.500 3.500" />
          </svg>
          <input
            type="search"
            aria-label="Search"
            placeholder="Search"
            className="ml-[9px] w-0 flex-1 bg-transparent font-['Roboto'] text-[12px] leading-none outline-none placeholder:text-[#d6d6d6]"
          />
          <svg viewBox="0 0 38 22" className="h-[20px] w-[38px] shrink-0" aria-hidden="true">
            <ellipse cx="19" cy="17" rx="17" ry="4.500" fill="#1aa3d6" />
            <ellipse cx="18" cy="19" rx="11" ry="2" fill="#5fd3ee" />
            <path d="M2 15q-1-3 3-5l4-4 5 4h5l4-5 4-4q2-3 4 0l3 6 3 6-2 4-8-1H11l-7 1z" fill="#b9a468" />
            <path d="M0 6q2-4 6-3l2 3-3 2 2 4-4 2zM10 6l3-4 3 4-2 3zM21 7l4-4 2 4-2 3zM28 8l4 2 3 5-5-1zM31 2l3 4-4-1z" fill="#3f8f4a" />
            <path d="M3 14l4 1 2 3-5-1zM27 13l6 2-4 2z" fill="#2f7a44" />
            <path d="M9 16v-4q2-2 4 0v-1q2.500-3 5 0 2-2 4 0 3-2 5 1v4z" fill="#f0e3dc" />
            <path d="M11 16v-2h2v2zM16 16v-3h2v3zM21 16v-2h2v2z" fill="#a3808a" />
          </svg>
        </label>
        <div className="ml-[2px] flex">
          {taskApps.map((a) => (
            <button key={a.name} aria-label={a.name} className="relative flex h-[37px] w-[37px] flex-col items-center justify-center pt-[5px]">
              <svg viewBox="0 0 20 20" className="size-[20px] overflow-visible">{a.art}</svg>
              <i className="mt-[3px] h-[3px] w-[5px] rounded-full bg-[#9a9a9a]" />
              {a.name === "WhatsApp" && (
                <b className="absolute top-[4px] left-[18px] flex h-[13px] w-[17px] items-center justify-center rounded-full bg-[#56bdf5] text-[9px] font-normal leading-none text-[#06202f]">80</b>
              )}
            </button>
          ))}
          <button aria-label="ubuntu2 virtual machine" className="flex h-[37px] w-[37px] flex-col items-center justify-center pt-[5px]">
            <VBoxIcon className="size-[20px]" />
            <i className="mt-[3px] h-[3px] w-[5px] rounded-full bg-[#9a9a9a]" />
          </button>
        </div>
      </div>
      <div className="flex items-center justify-end pr-[15px]">
        <button aria-label="Show hidden icons" className="mr-[15px]">
          <svg viewBox="0 0 10 6" className="h-[6px] w-[10px]"><path d="M1 5.500l4-4 4 4" fill="none" stroke="#fff" strokeWidth="1.300" /></svg>
        </button>
        <svg viewBox="0 0 14 14" className="mr-[13px] size-[14px]" fill="none" stroke="#e8e8e8">
          <path d="M1 5.500Q3 1 7 1q3.500 0 5.500 3M12.800.5V4H9.500M1 13.500V10h3M1.500 10.500q2 2.500 4.500 2.500" />
          <circle cx="10.500" cy="10.500" r="3.500" fill="#1787dd" stroke="none" />
        </svg>
        <svg viewBox="0 0 14 12" className="mr-[13px] h-[12px] w-[14px]">
          <path d="M3 9a3 3 0 01-.5-6Q4-.5 7.500.8q2 .2 3 2.700 3 .5 2.500 5.500z" fill="#a9a9a9" />
          <circle cx="10" cy="8" r="4" fill="#d8262c" />
          <path d="M8.500 6.500l3 3M11.500 6.500l-3 3" stroke="#fff" />
        </svg>
        <svg viewBox="0 0 14 11" className="mr-[6px] h-[11px] w-[14px]" fill="none" stroke="#f2f2f2" strokeWidth="1.100">
          <path d="M.5 4q6.500-6 13 0M2.500 6q4.500-4 9 0M4.500 8Q7 6 9.500 8" />
          <circle cx="7" cy="9.700" r="0.900" fill="#f2f2f2" stroke="none" />
        </svg>
        <svg viewBox="0 0 14 12" className="mr-[6px] h-[12px] w-[14px]" fill="none" stroke="#f2f2f2">
          <path d="M.5 4.200h2L5.500 1.500v9L2.500 7.800h-2zM7.500 4.200q1 1.800 0 3.600M9.500 2.800q1.800 3.200 0 6.400M11.500 1.500q2.500 4.500 0 9" />
        </svg>
        <svg viewBox="0 0 14 12" className="mr-[12px] h-[12px] w-[14px]">
          <path d="M1 5v5q0 1 1 1h9q1 0 1-1V4.500q0-1-1-1H7" fill="none" stroke="#f2f2f2" strokeWidth="1.200" />
          <path d="M3 7l6-2v4.500H3zM12.500 5.500H14v3h-1.500zM3.500 0L1 5h2L2.500 7.500 6 3H4z" fill="#f2f2f2" />
        </svg>
        <time className="mr-[8px] pb-px text-right text-[10px] leading-[13px]">
          12:37
          <br />
          04/01/2025
        </time>
        <svg viewBox="0 0 12 13" className="h-[13px] w-[12px]">
          <path d="M0 10l1.500-2V4.500Q2 1 6 1t4.500 3.500V8L12 10z" fill="#f2f2f2" />
          <path d="M4 11h4q-.5 2-2 2t-2-2z" fill="#f2f2f2" />
          <path d="M3.500 4h2l-2 3h2M7 3h3L7 6.500h3" stroke="#1a1a1a" fill="none" strokeWidth="0.900" />
        </svg>
      </div>
    </footer>
  );
}

export default function App() {
  return (
    <div className="flex h-screen flex-col overflow-hidden bg-[#3a3b3d] font-['Open_Sans','Noto_Sans',sans-serif]">
      <HostTitleBar />
      <HostMenu />
      <main className="flex min-h-0 flex-1">
        <div className="flex min-w-0 flex-1 flex-col">
          <GnomeBar />
          <div className="flex min-h-0 flex-1">
            <Dock />
            <div className="flex min-w-0 flex-1 flex-col">
              <RvizTitleBar />
              <RvizMenu />
              <Toolbar />
              <div className="flex min-h-0 flex-1">
                <DisplaysPanel />
                <button aria-label="Collapse left panels" className="flex w-[14px] shrink-0 items-center bg-[#efefef] pt-[42px]">
                  <i className="h-[10px] w-[3px] border-x border-dotted border-[#c4c4c4]" />
                  <svg viewBox="0 0 3 5" className="ml-[4px] h-[5px] w-[3px]"><path d="M3 0v5L0 2.500z" fill="#333" /></svg>
                </button>
                <div className="min-w-0 flex-1">
                  <Scene />
                </div>
              </div>
            </div>
          </div>
        </div>
        <VScroll />
      </main>
      <HScroll />
      <StatusBar />
      <Taskbar />
    </div>
  );
}
